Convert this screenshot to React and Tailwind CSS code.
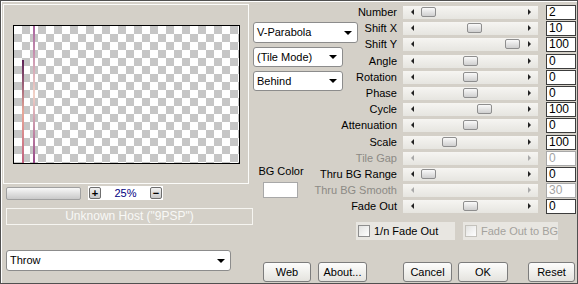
import React from 'react';

const rows = [
  { label: 'Number', value: '2', thumb: 18, h: 'h-[16px]' },
  { label: 'Shift X', value: '10', thumb: 64, h: 'h-[16px]' },
  { label: 'Shift Y', value: '100', thumb: 102, h: 'h-[17px]' },
  { label: 'Angle', value: '0', thumb: 60, h: 'h-[16px]' },
  { label: 'Rotation', value: '0', thumb: 60, h: 'h-[16px]' },
  { label: 'Phase', value: '0', thumb: 60, h: 'h-[16px]' },
  { label: 'Cycle', value: '100', thumb: 74, h: 'h-[16px]' },
  { label: 'Attenuation', value: '0', thumb: 60, h: 'h-[17px]' },
  { label: 'Scale', value: '100', thumb: 39, h: 'h-[16px]' },
  { label: 'Tile Gap', value: '0', disabled: true, h: 'h-[16px]' },
  { label: 'Thru BG Range', value: '0', thumb: 18, h: 'h-[16px]' },
  { label: 'Thru BG Smooth', value: '30', disabled: true, h: 'h-[16px]' },
  { label: 'Fade Out', value: '0', thumb: 60, h: 'h-[16px]' },
];

const Arrow = () => (
  <span className="w-0 h-0 border-x-[4px] border-x-transparent border-t-[4px] border-t-black" />
);

const Select = ({ label, className }) => (
  <div className={`flex items-center justify-between pl-[3px] pr-[5px] bg-white border border-[#8c8c8c] rounded-[3px] ${className}`}>
    <span>{label}</span>
    <Arrow />
  </div>
);

const Slider = ({ thumb, disabled }) => (
  <div className="relative w-[135px] h-[13px] bg-gradient-to-b from-[#f6f5f2] to-[#e6e5e0]">
    <span className={`absolute left-[8px] top-[3px] w-0 h-0 border-y-[3.5px] border-y-transparent border-r-[3px] ${disabled ? 'border-r-[#a8a8a8]' : 'border-r-[#222]'}`} />
    <span className={`absolute left-[125px] top-[3px] w-0 h-0 border-y-[3.5px] border-y-transparent border-l-[3px] ${disabled ? 'border-l-[#a8a8a8]' : 'border-l-[#222]'}`} />
    {!disabled && (
      <span
        className="absolute top-[1px] w-[15px] h-[10px] rounded-[2px] border border-[#8e8e8e] bg-gradient-to-b from-[#fafafa] to-[#cfcfcf]"
        style={{ left: thumb }}
      />
    )}
  </div>
);

const Check = ({ label, disabled, className }) => (
  <div className={`flex items-center h-[18px] pl-[2px] bg-[#e8e6e1] whitespace-nowrap ${className}`}>
    <span className={`w-[12px] h-[12px] shrink-0 border ${disabled ? 'border-[#c4c2bc]' : 'border-[#8e8e8e]'} bg-gradient-to-br from-[#e2e2e0] to-white`} />
    <span className={`ml-[4px] ${disabled ? 'text-[#a4a29d]' : 'text-black'}`}>{label}</span>
  </div>
);

const Button = ({ label, className }) => (
  <div className={`h-[20px] flex items-center justify-center rounded-[3px] border border-[#7c7c7c] bg-gradient-to-b from-[#fdfdfc] to-[#e4e3de] ${className}`}>
    {label}
  </div>
);

const SmallBtn = ({ children }) => (
  <div className="w-[12px] h-[12px] flex items-center justify-center rounded-[2px] border border-[#6e6e6e] bg-gradient-to-b from-[#f2f2f2] to-[#c8c8c8] text-[11px] leading-none font-bold">
    {children}
  </div>
);

export default function App() {
  return (
    <div className="w-[578px] h-[284px] bg-[#d4d0c8] border border-[#505050] shadow-[inset_1px_1px_0_#ffffff] flex text-[11px] leading-[13px] text-black font-['Liberation_Sans',Arial,sans-serif] overflow-hidden">
      {/* left column */}
      <div className="w-[252px] shrink-0 flex flex-col">
        <div className="ml-[2px] mt-[3px] w-[246px] h-[180px] border border-[#fbfbf9]">
          <div className="relative ml-[9px] mt-[20px] w-[227px] h-[139px] border border-black bg-[conic-gradient(#c6c6c6_25%,#ffffff_0_50%,#c6c6c6_0_75%,#ffffff_0)] bg-[length:16px_16px]">
            <span className="absolute left-[8px] top-[34px] bottom-0 w-[2px] bg-gradient-to-b from-[#5a1f55] via-[#e8a898] to-[#c0607e]" />
            <span className="absolute left-[19px] top-0 bottom-0 w-[2px] bg-gradient-to-b from-[#a8649e] via-[#f2d2c6] to-[#964888]" />
          </div>
        </div>
        <div className="mt-[2px] flex items-center h-[14px]">
          <div className="ml-[5px] w-[75px] h-[13px] rounded-[2px] border border-[#a0a0a0] bg-gradient-to-b from-[#f8f8f8] to-[#c9c9c9]" />
          <div className="ml-[7px] w-[75px] h-[14px] bg-white flex items-center px-[1px]">
            <SmallBtn>+</SmallBtn>
            <span className="flex-1 text-center text-[#000080] text-[11px]">25%</span>
            <SmallBtn>−</SmallBtn>
          </div>
        </div>
        <div className="mt-[8px] ml-[5px] w-[247px] h-[17px] border border-[#f6f5f1] flex items-center justify-center text-[12px] text-[#f8f8f6]">
          Unknown Host ("9PSP")
        </div>
        <Select label="Throw" className="mt-[25px] ml-[5px] w-[225px] h-[21px]" />
      </div>

      {/* right part */}
      <div className="flex-1 flex flex-col">
        <div className="mt-[3px] h-[211px] flex">
          <div className="w-[105px] shrink-0 flex flex-col">
            <Select label="V-Parabola" className="mt-[18px] w-[105px] h-[21px]" />
            <Select label="(Tile Mode)" className="mt-[4px] w-[90px] h-[20px]" />
            <Select label="Behind" className="mt-[4px] w-[90px] h-[20px]" />
            <div className="mt-[74px] w-[56px] text-center">BG Color</div>
            <div className="mt-[4px] ml-[10px] w-[35px] h-[16px] bg-white border border-[#a8a8a8]" />
          </div>
          <div className="flex flex-col">
            {rows.map((r) => (
              <div key={r.label} className={`${r.h} flex items-center`}>
                <div className={`w-[45px] pr-[6px] flex justify-end whitespace-nowrap ${r.disabled ? 'text-[#8c8a85]' : 'text-black'}`}>
                  {r.label}
                </div>
                <Slider thumb={r.thumb} disabled={r.disabled} />
                <div className={`ml-[8px] w-[30px] h-[15px] bg-white border pl-[2px] text-[12px] leading-[13px] ${r.disabled ? 'border-[#a8a8a8] text-[#a4a4a4]' : 'border-[#3c3c3c] text-black'}`}>
                  {r.value}
                </div>
              </div>
            ))}
          </div>
        </div>
        <div className="mt-[7px] flex">
          <Check label="1/n Fade Out" className="ml-[103px] w-[99px]" />
          <Check label="Fade Out to BG" disabled className="ml-[8px] w-[95px]" />
        </div>
        <div className="mt-[22px] flex">
          <Button label="Web" className="ml-[10px] w-[48px]" />
          <Button label="About..." className="ml-[7px] w-[49px]" />
          <Button label="Cancel" className="ml-[36px] w-[49px]" />
          <Button label="OK" className="ml-[6px] w-[50px]" />
          <Button label="Reset" className="ml-[20px] w-[47px]" />
        </div>
      </div>
    </div>
  );
}
